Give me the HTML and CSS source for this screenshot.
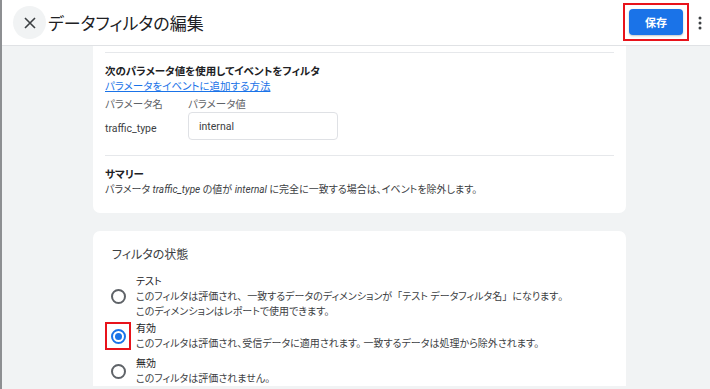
FILE: index.html
```html
<!doctype html>
<html lang="ja">
    <head>
        <meta charset="utf-8">
        <title>データフィルタの編集</title>
        <link rel="stylesheet" href="styles.css">
    </head>
    <body>
        <div class="app">
            <header class="topbar">
                <button class="close" type="button" aria-label="閉じる">
                    <svg width="12" height="12" viewBox="0 0 12 12"><path d="M1 1L11 11M11 1L1 11" stroke="#3c4043" stroke-width="1.6" fill="none"/></svg>
                </button>
                <h1 class="title">データフィルタの編集</h1>
                <div class="spacer"></div>
                <div class="mark">
                    <button class="save" type="button">保存</button>
                </div>
                <button class="more" type="button" aria-label="その他">
                    <svg width="4" height="14" viewBox="0 0 4 14"><circle cx="2" cy="2" r="1.5"/><circle cx="2" cy="7" r="1.5"/><circle cx="2" cy="12" r="1.5"/></svg>
                </button>
            </header>
            <main class="content">
                <section class="card card-cond">
                    <hr class="rule">
                    <h3 class="sub">次のパラメータ値を使用してイベントをフィルタ</h3>
                    <a class="link" href="#">パラメータをイベントに追加する方法</a>
                    <div class="params">
                        <span class="label">パラメータ名</span>
                        <span class="label">パラメータ値</span>
                        <span class="pname">traffic_type</span>
                        <div class="field">internal</div>
                    </div>
                    <hr class="rule rule-sum">
                    <h3 class="sub sum-head">サマリー</h3>
                    <p class="summary">パラメータ <i>traffic_type</i> の値が <i>internal</i> に完全に一致する場合は、イベントを除外します。</p>
                </section>
                <section class="card card-state">
                    <h2 class="card-title">フィルタの状態</h2>
                    <div class="options">
                        <label class="option">
                            <span class="radio-box"><span class="radio"></span></span>
                            <span class="opt-text">
                                <span class="opt-name">テスト</span>
                                <span class="opt-desc">このフィルタは評価され<span class="fw">、</span>一致するデータのディメンションが<span class="fw">「</span>テスト データフィルタ名<span class="fw">」</span>になります<span class="fw">。</span><br>このディメンションはレポートで使用できます。</span>
                            </span>
                        </label>
                        <label class="option">
                            <span class="radio-box marked"><span class="radio checked"></span></span>
                            <span class="opt-text">
                                <span class="opt-name">有効</span>
                                <span class="opt-desc">このフィルタは評価され、受信データに適用されます。 一致するデータは処理から除外されます。</span>
                            </span>
                        </label>
                        <label class="option option-last">
                            <span class="radio-box"><span class="radio"></span></span>
                            <span class="opt-text">
                                <span class="opt-name">無効</span>
                                <span class="opt-desc">このフィルタは評価されません。</span>
                            </span>
                        </label>
                    </div>
                </section>
            </main>
        </div>
    </body>
</html>
```

FILE: styles.css
```css
* {
    box-sizing: border-box;
}
html,
body {
    margin: 0;
    padding: 0;
    height: 100%;
    overflow: hidden;
}
body {
    font-family: Roboto, "Noto Sans CJK JP", sans-serif;
    font-feature-settings: "palt";
    color: #202124;
    background-color: #fff;
}
button {
    font-family: inherit;
    border: 0;
    background: none;
    padding: 0;
    cursor: pointer;
}
.app {
    height: 100vh;
    display: flex;
    flex-direction: column;
    border-left: 2px solid #8d8f92;
}

/* top bar */
.topbar {
    height: 46px;
    flex-shrink: 0;
    display: flex;
    align-items: center;
    padding-left: 11px;
    border-bottom: 1px solid #e0e2e5;
    background-color: #fff;
}
.close {
    width: 33px;
    height: 33px;
    border-radius: 50%;
    background-color: #f1f3f4;
    display: flex;
    align-items: center;
    justify-content: center;
}
.title {
    margin: 0 0 0 2px;
    font-size: 17px;
    font-weight: 400;
    color: #202124;
}
.spacer {
    flex: 1;
}
.mark {
    border: 2px solid #e8131b;
    padding: 4px;
    margin-top: -2px;
}
.save {
    display: block;
    width: 54px;
    height: 26px;
    border-radius: 4px;
    background-color: #1a73e8;
    color: #fff;
    font-size: 11px;
    font-weight: 700;
    box-shadow: 0 1px 2px rgba(60, 64, 67, .3);
}
.more {
    width: 21px;
    height: 30px;
    display: flex;
    align-items: center;
    justify-content: center;
    fill: #3c4043;
}

/* content */
.content {
    flex: 1;
    background-color: #f1f3f4;
    padding: 0 84px 0 91px;
    overflow: hidden;
}
.card {
    background-color: #fff;
    border-radius: 0 0 7px 7px;
    padding: 6px 12px 16px 12px;
    font-size: 10px;
    line-height: 15px;
}
.rule {
    margin: 0;
    border: 0;
    border-top: 1px solid #e6e8eb;
}
.sub {
    margin: 11px 0 0 0;
    font-size: 10.5px;
    font-weight: 700;
    line-height: 15px;
}
.link {
    display: block;
    color: #1a73e8;
    text-decoration: underline;
    font-size: 10.5px;
}
.params {
    display: grid;
    grid-template-columns: 83px 150px;
    align-items: center;
    margin-top: 3px;
    font-size: 10.5px;
}
.label {
    color: #5f6368;
}
.pname {
    padding-top: 4px;
    color: #3c4043;
}
.field {
    height: 28px;
    border: 1px solid #dfe1e5;
    border-radius: 4px;
    padding: 0 10px;
    display: flex;
    align-items: center;
    color: #3c4043;
}
.rule-sum {
    margin-top: 15px;
}
.summary {
    margin: 0;
    color: #3c4043;
}
.summary i {
    font-style: italic;
}

.card-state {
    margin-top: 18px;
    border-radius: 7px 7px 0 0;
    padding: 14px 12px 0 12px;
}
.card-title {
    margin: 0 0 0 7px;
    font-size: 12px;
    font-weight: 400;
    line-height: 20px;
    color: #3c4043;
}
.options {
    margin-top: 9px;
    display: flex;
    flex-direction: column;
    gap: 2px;
}
.option {
    display: flex;
    align-items: center;
    gap: 5px;
}
.option-last {
    margin-top: 3px;
}
.radio-box {
    width: 26px;
    height: 28px;
    flex-shrink: 0;
    border: 2px solid transparent;
    display: flex;
    align-items: center;
    justify-content: center;
}
.radio-box.marked {
    border-color: #e8131b;
}
.radio {
    width: 15px;
    height: 15px;
    border-radius: 50%;
    border: 2px solid #5f6368;
    display: flex;
    align-items: center;
    justify-content: center;
}
.radio.checked {
    border-color: #1a73e8;
}
.radio.checked::after {
    content: "";
    width: 7px;
    height: 7px;
    border-radius: 50%;
    background-color: #1a73e8;
}
.opt-text {
    display: flex;
    flex-direction: column;
}
.opt-name {
    color: #202124;
}
.opt-desc {
    color: #3c4043;
}
.fw {
    font-feature-settings: normal;
}
```
